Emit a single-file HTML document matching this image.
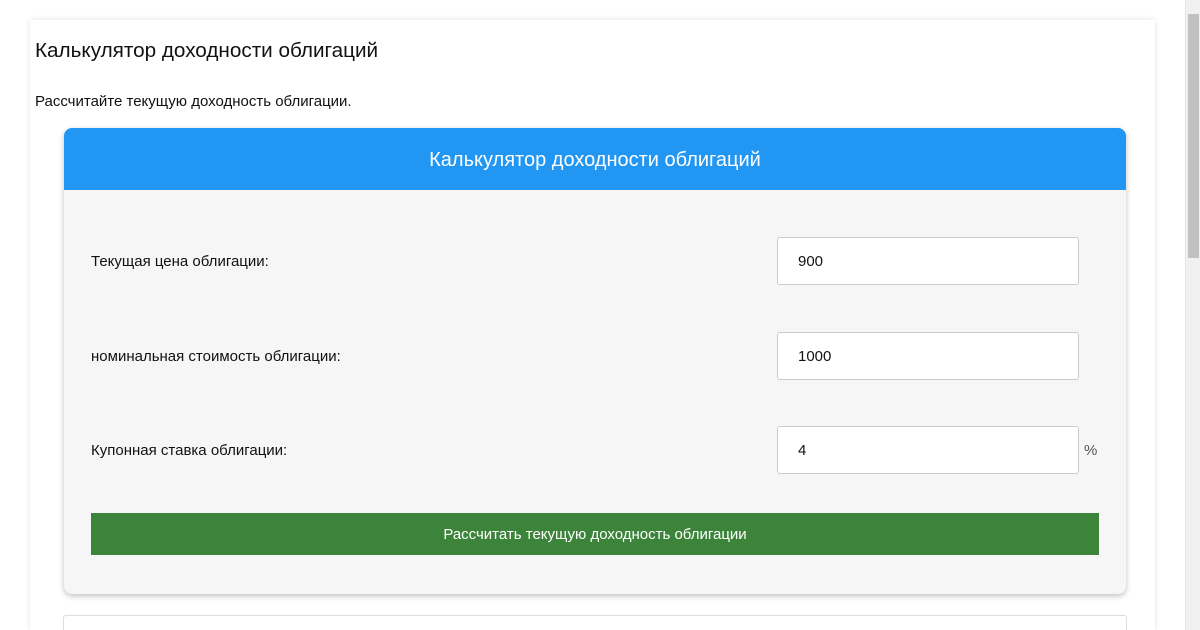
<!DOCTYPE html>
<html style="overflow:hidden;height:630px"><head><meta charset="utf-8"><style>
*{box-sizing:border-box}
body{margin:0;width:1200px;height:630px;overflow:hidden;background:#fff;font-family:"Liberation Sans",sans-serif;position:relative}
.outer{position:absolute;left:30px;top:20px;width:1125px;height:610px;background:#fff;box-shadow:0 0 6px rgba(0,0,0,.12)}
h1{position:absolute;left:5px;top:19px;margin:0;font-size:20.7px;font-weight:normal;color:#111}
.sub{position:absolute;left:5px;top:72px;font-size:15px;color:#111}
.card{position:absolute;left:34px;top:108px;width:1062px;height:466px;background:#f6f6f6;border-radius:8px;box-shadow:0 2px 6px rgba(0,0,0,.25);overflow:hidden}
.hd{height:62px;background:#2196f3;color:#fff;font-size:20px;text-align:center;line-height:64px}
.lbl{position:absolute;left:27px;font-size:15px;color:#111}
.inp{position:absolute;left:713px;width:302px;height:48px;background:#fff;border:1px solid #ccc;border-radius:3px;font-size:15px;padding-left:20px;line-height:48px;color:#111}
.pct{position:absolute;left:1020px;font-size:15px;color:#555}
.btn{position:absolute;left:27px;top:385px;width:1008px;height:42px;background:#3b8439;color:#fff;font-size:15px;text-align:center;line-height:44px}
.bot{position:absolute;left:33px;top:595px;width:1064px;height:15px;background:#fff;border:1px solid #ddd;border-bottom:none;border-radius:3px 3px 0 0}
.sb{position:absolute;left:1185px;top:0;width:15px;height:630px;background:#f1f1f1;border-left:1px solid #e5e5e5}
.th{position:absolute;left:2px;top:14px;width:11px;height:244px;background:#c1c1c1}
</style></head><body>
<div class="outer">
<h1>Калькулятор доходности облигаций</h1>
<div class="sub" style="top:73px">Рассчитайте текущую доходность облигации.</div>
<div class="card">
<div class="hd">Калькулятор доходности облигаций</div>
<div class="lbl" style="top:125px">Текущая цена облигации:</div>
<div class="inp" style="top:109px">900</div>
<div class="lbl" style="top:220px">номинальная стоимость облигации:</div>
<div class="inp" style="top:204px">1000</div>
<div class="lbl" style="top:314px">Купонная ставка облигации:</div>
<div class="inp" style="top:298px">4</div>
<div class="pct" style="top:314px">%</div>
<div class="btn">Рассчитать текущую доходность облигации</div>
</div>
<div class="bot"></div>
</div>
<div class="sb"><div class="th"></div></div>
</body></html>
